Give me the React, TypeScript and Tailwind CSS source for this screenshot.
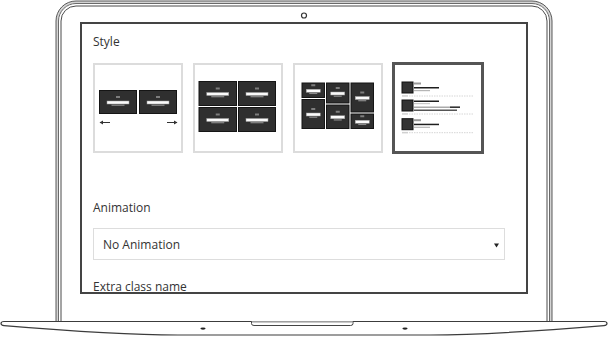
import React from "react";

function lidPath(inset: number, r: number, close = false) {
  const x0 = 56 + inset;
  const x1 = 552 - inset;
  const y0 = 1 + inset;
  return `M${x0},323 V${y0 + r} A${r},${r} 0 0 1 ${x0 + r},${y0} H${x1 - r} A${r},${r} 0 0 1 ${x1},${y0 + r} V323${close ? " Z" : ""}`;
}

function Tile({ x, y, w, h }: { x: number; y: number; w: number; h: number }) {
  const cx = x + w / 2;
  const cy = y + h / 2;
  const bw = Math.round(w * 0.58);
  const gw = Math.round(w * 0.33);
  return (
    <g>
      <rect x={x + 0.5} y={y + 0.5} width={w - 1} height={h - 1} fill="#2f2f2f" stroke="#151515" strokeWidth={1} />
      <rect x={cx - 2} y={cy - 6} width={4} height={2} fill="#7d7d7d" />
      <rect x={cx - bw / 2} y={cy - 1} width={bw} height={3} fill="#fafafa" stroke="#9a9a9a" strokeWidth={0.5} />
      <rect x={cx - gw / 2} y={cy + 2.6} width={gw} height={1.2} fill="#8a8a8a" />
    </g>
  );
}

function Arrow({ x1, x2, y, dir }: { x1: number; x2: number; y: number; dir: "l" | "r" }) {
  return (
    <g>
      <line x1={x1} y1={y} x2={x2} y2={y} stroke="#333" strokeWidth={1} />
      {dir === "l" ? (
        <polygon points={`${x1 - 0.5},${y} ${x1 + 3},${y - 2} ${x1 + 3},${y + 2}`} fill="#333" />
      ) : (
        <polygon points={`${x2 + 0.5},${y} ${x2 - 3},${y - 2} ${x2 - 3},${y + 2}`} fill="#333" />
      )}
    </g>
  );
}

function Thumb1() {
  return (
    <svg width={86} height={86} viewBox="0 0 86 86">
      <Tile x={4} y={25} w={38} h={24} />
      <Tile x={44} y={25} w={38} h={24} />
      <Arrow x1={5} x2={15} y={57.5} dir="l" />
      <Arrow x1={72} x2={82} y={57.5} dir="r" />
    </svg>
  );
}

function Thumb2() {
  return (
    <svg width={86} height={86} viewBox="0 0 86 86">
      <Tile x={3.5} y={16} w={38.5} h={25} />
      <Tile x={43} y={16} w={38} h={25} />
      <Tile x={3.5} y={42} w={38.5} h={25} />
      <Tile x={43} y={42} w={38} h={25} />
    </svg>
  );
}

function Thumb3() {
  return (
    <svg width={86} height={86} viewBox="0 0 86 86">
      <Tile x={6.5} y={17.5} w={23.5} h={15.5} />
      <Tile x={6.5} y={34} w={23.5} h={30} />
      <Tile x={31} y={17.5} w={23.5} h={21} />
      <Tile x={31} y={39.5} w={23.5} h={24.5} />
      <Tile x={55.5} y={17.5} w={23.5} h={30} />
      <Tile x={55.5} y={48.5} w={23.5} h={15.5} />
    </svg>
  );
}

function ListItem({ y, long }: { y: number; long?: boolean }) {
  return (
    <g>
      <rect x={7} y={y} width={11} height={11} fill="#333" stroke="#111" strokeWidth={1} />
      {long ? (
        <>
          <rect x={19} y={y + 0.5} width={25} height={1.5} fill="#1e1e1e" />
          <rect x={19} y={y + 3} width={16} height={1.2} fill="#c8c8c8" />
          <rect x={19} y={y + 6.5} width={46} height={1.5} fill="#aaa" />
          <rect x={55} y={y + 6.5} width={10} height={1.5} fill="#333" />
          <rect x={19} y={y + 9.5} width={43} height={1.5} fill="#555" />
        </>
      ) : (
        <>
          <rect x={19} y={y + 0.5} width={7} height={2} fill="#9a9a9a" />
          <rect x={19} y={y + 5} width={25} height={1.5} fill="#1e1e1e" />
          <rect x={19} y={y + 8} width={16} height={1.2} fill="#b5b5b5" />
        </>
      )}
      <rect x={7} y={y + 13.2} width={6} height={1.5} fill="#d0d0d0" />
      <line x1={14} y1={y + 14} x2={78} y2={y + 14} stroke="#d6d6d6" strokeWidth={1} strokeDasharray="1.5 1" />
    </g>
  );
}

function Thumb4() {
  return (
    <svg width={86} height={86} viewBox="0 0 86 86">
      <ListItem y={17} />
      <ListItem y={35} long />
      <ListItem y={53.7} />
    </svg>
  );
}

function LaptopFrame() {
  return (
    <svg className="absolute inset-0 pointer-events-none" width={608} height={337} viewBox="0 0 608 337">
      <path d={lidPath(0, 20, true)} fill="#d4d4d4" stroke="#5a5a5a" strokeWidth={1} />
      <path d={lidPath(2.5, 17.5, true)} fill="#ffffff" stroke="#6a6a6a" strokeWidth={1} />
      <path d={lidPath(5, 15)} fill="none" stroke="#4a4a4a" strokeWidth={1} />
      <circle cx={304} cy={15.5} r={2.5} fill="none" stroke="#333" strokeWidth={1.2} />
      <path
        d="M4,321.5 H604 Q607,321.5 607,323.5 Q607,325.3 604,325.6 C540,331 480,335 430,335 H178 C128,335 68,331 4,325.6 Q1,325.3 1,323.5 Q1,321.5 4,321.5 Z"
        fill="#ffffff"
        stroke="#3c3c3c"
        strokeWidth={1.2}
      />
      <path d="M251.5,321.5 V323.6 Q251.5,325.5 254,325.5 H350.5 Q353,325.5 353,323.6 V321.5" fill="#fff" stroke="#444" strokeWidth={1} />
      <line x1={252} y1={322.3} x2={352.5} y2={322.3} stroke="#aaa" strokeWidth={0.8} />
      <ellipse cx={203} cy={328.6} rx={2.6} ry={1.1} fill="#222" />
      <ellipse cx={405} cy={328.6} rx={2.6} ry={1.1} fill="#222" />
    </svg>
  );
}

export default function App() {
  return (
    <div className="relative w-[608px] h-[337px] bg-white overflow-hidden font-['Open_Sans',sans-serif] text-[#333]">
      <LaptopFrame />
      <div className="relative z-10 ml-[80px] mt-[22px] w-[448px] h-[272px] border-2 border-[#444] bg-white overflow-hidden pl-[11px] pr-[21px] pt-[10px]">
        <div className="text-[12px] leading-[16px]">Style</div>
        <div className="mt-[12px] flex items-center gap-[10px] h-[92px]">
          <div className="w-[90px] h-[90px] border-2 border-[#dcdcdc] bg-white">
            <Thumb1 />
          </div>
          <div className="w-[90px] h-[90px] border-2 border-[#dcdcdc] bg-white">
            <Thumb2 />
          </div>
          <div className="w-[90px] h-[90px] border-2 border-[#dcdcdc] bg-white">
            <Thumb3 />
          </div>
          <div className="w-[92px] h-[92px] -mx-px border-[3px] border-[#555] bg-white">
            <Thumb4 />
          </div>
        </div>
        <div className="mt-[46px] text-[12px] leading-[16px]">Animation</div>
        <div className="mt-[12px] h-[32px] w-[412px] border border-[#dddddd] flex items-center justify-between pl-[9px] pr-[5px] pt-[2px]">
          <span className="text-[12px] leading-[16px]">No Animation</span>
          <svg width={5} height={5} viewBox="0 0 5 5">
            <polygon points="0,0.5 5,0.5 2.5,4.5" fill="#222" />
          </svg>
        </div>
        <div className="mt-[19px] text-[12px] leading-[16px]">Extra class name</div>
      </div>
    </div>
  );
}
